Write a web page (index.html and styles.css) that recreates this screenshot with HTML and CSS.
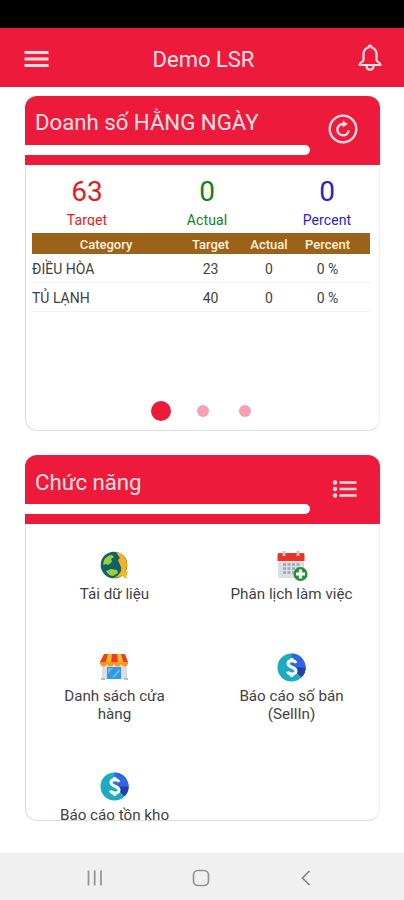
FILE: index.html
```html
<!DOCTYPE html>
<html lang="vi">
<head>
<meta charset="utf-8">
<title>Demo LSR</title>
<link rel="stylesheet" href="styles.css">
</head>
<body>
<div class="status"></div>
<header class="appbar">
  <svg class="menu" width="26" height="18" viewBox="0 0 26 18" stroke="#ffdde1" stroke-width="2.9"><path d="M.5 2.500h24M.5 9h24M.5 15.500h24"/></svg>
  <h1>Demo LSR</h1>
  <svg class="bell" width="26" height="30" viewBox="0 0 26 30" fill="none" stroke="#ffdde1" stroke-width="2.200" stroke-linejoin="round" stroke-linecap="round"><path d="M13 2.500c-.8 0-1.500 1-1.500 2-3.600.8-5 3.700-5 7v5.500c0 2-4 2.500-4 5h21c0-2.500-4-3-4-5v-5.500c0-3.300-1.400-6.200-5-7 0-1-.7-2-1.500-2zM9.500 22.500c0 5.500 7 5.500 7 0"/></svg>
</header>
<main>
  <section class="card sales">
    <div class="head">
      <h2>Doanh số HẰNG NGÀY</h2>
      <div class="bar"></div>
      <svg class="action" width="32" height="32" viewBox="0 0 32 32" fill="none" stroke="#ffdde1" stroke-width="2.300"><circle cx="16" cy="16" r="13.300"/><path d="M17.500 11h-1.500a5.700 5.700 0 1 0 5.700 6.200" stroke-width="2.300"/><path d="M15.800 7.500l5 3.600-5 3.500z" fill="#ffdde1" stroke="none"/></svg>
    </div>
    <div class="totals">
      <div class="total red"><b>63</b><span>Target</span></div>
      <div class="total green"><b>0</b><span>Actual</span></div>
      <div class="total blue"><b>0</b><span>Percent</span></div>
    </div>
    <div class="table">
      <div class="row th"><span>Category</span><span>Target</span><span>Actual</span><span>Percent</span></div>
      <div class="row"><span class="name">ĐIỀU HÒA</span><span>23</span><span>0</span><span>0 %</span></div>
      <div class="row"><span class="name">TỦ LẠNH</span><span>40</span><span>0</span><span>0 %</span></div>
    </div>
    <div class="dots"><i class="on"></i><i></i><i></i></div>
  </section>
  <section class="card functions">
    <div class="head">
      <h2>Chức năng</h2>
      <div class="bar"></div>
      <svg class="action list" width="26" height="20" viewBox="0 0 26 20" fill="#ffdde1"><circle cx="3" cy="3.500" r="2.200"/><circle cx="3" cy="10" r="2.200"/><circle cx="3" cy="16.500" r="2.200"/><path d="M7.500 2.300h17v2.500h-17zM7.500 8.800h17v2.500h-17zM7.500 15.300h17v2.500h-17z"/></svg>
    </div>
    <div class="tiles">
      <div class="tile">
        <svg width="32" height="30" viewBox="0 0 32 30"><circle cx="15" cy="14" r="13.300" fill="#12606a"/><path d="M5 9c2-3 5-5 8-5l2 2-3 2 1 3-4 3-2-1-3 1zM7 20l5-2 6 1 1 3-5 3c-3 0-5-2-7-5z" fill="#9cce35"/><path d="M17 1c7 1 11 7 11 13 0 4-2 8-6 11-2 1-5 2-7 2 5-3 8-6 7-11l-3-7 2-2z" fill="#f4b322"/><path d="M22 21l7-1-1 3-1 5-5-4z" fill="#f9b91b"/></svg>
        <p>Tải dữ liệu</p>
      </div>
      <div class="tile">
        <svg width="32" height="30" viewBox="0 0 32 30"><path d="M2 7h26v18q0 2-2 2H4q-2 0-2-2z" fill="#d9dfe3"/><path d="M3 2h24q1.500 0 1.500 2v6h-27V4q0-2 1.500-2z" fill="#e93428"/><path d="M8 0v5M22 0v5" stroke="#bdc5ca" stroke-width="3"/><path d="M7 13.500h17M7 17.500h17M7 21.500h17" stroke="#9da7ae" stroke-width="2.500" stroke-dasharray="3 1.500"/><circle cx="24.500" cy="23" r="7" fill="#24912f"/><path d="M24.500 18.500v9M20 23h9" stroke="#fff" stroke-width="3.200"/></svg>
        <p>Phân lịch làm việc</p>
      </div>
      <div class="tile">
        <svg width="32" height="30" viewBox="0 0 32 30"><path d="M3 11h25v15H3z" fill="#d7dee5"/><path d="M2 25h4v2H2zM25 25h4v2h-4z" fill="#b6bdc7"/><path d="M8 14h14v12H8z" fill="#3298e5"/><path d="M14 15l-5 6v-6zM20 16l-7 8h3l5-6z" fill="#69b9ee"/><path d="M5 1h21l3 8v2H1V9z" fill="#ef3b2d"/><path d="M9 1h4l-1 9H6.500zM18 1h4l2.500 9H19z" fill="#ffbd18"/><path d="M1 9h28v1q-1 3.500-3.500 3.500T22 10q-.5 3.500-3.500 3.500T15 10q-.5 3.500-3.500 3.500T8 10q-.5 3.500-3.500 3.500T1 10z" fill="#ff9717"/></svg>
        <p>Danh sách cửa<br>hàng</p>
      </div>
      <div class="tile">
        <svg width="32" height="30" viewBox="0 0 32 30"><circle cx="15.500" cy="14.500" r="14" fill="#1cabc0"/><path d="M15.500.5a14 14 0 0 1 10 23.800l-10-9.800z" fill="#3264e4"/><path d="M15.500 14.500h14a14 14 0 0 1-4 9.800z" fill="#233eb0"/><path d="M20 10c-1-3-8-3.500-8 .5 0 4.500 8 3 8 7.500 0 4-7.500 4-8.500.5M15.800 5v3M15.800 21v3" fill="none" stroke="#fff" stroke-width="3"/></svg>
        <p>Báo cáo số bán<br>(SellIn)</p>
      </div>
      <div class="tile">
        <svg width="32" height="30" viewBox="0 0 32 30"><circle cx="15.500" cy="14.500" r="14" fill="#1cabc0"/><path d="M15.500.5a14 14 0 0 1 10 23.800l-10-9.800z" fill="#3264e4"/><path d="M15.500 14.500h14a14 14 0 0 1-4 9.800z" fill="#233eb0"/><path d="M20 10c-1-3-8-3.500-8 .5 0 4.500 8 3 8 7.500 0 4-7.500 4-8.500.5M15.800 5v3M15.800 21v3" fill="none" stroke="#fff" stroke-width="3"/></svg>
        <p>Báo cáo tồn kho</p>
      </div>
    </div>
  </section>
</main>
<nav>
  <svg width="18" height="18" viewBox="0 0 18 18" stroke="#929292" stroke-width="1.700"><path d="M2.500 1.500v15M8.700 1.500v15M15 1.500v15"/></svg>
  <svg width="18" height="18" viewBox="0 0 18 18" fill="none" stroke="#929292" stroke-width="1.700"><rect x="1.500" y="1.500" width="15" height="15" rx="4.500"/></svg>
  <svg width="18" height="18" viewBox="0 0 18 18" fill="none" stroke="#858585" stroke-width="1.700"><path d="M12.500 2l-7 7 7 7"/></svg>
</nav>
</body>
</html>
```
FILE: styles.css
```css
* { box-sizing: border-box; }
body {
  margin: 0;
  height: 900px;
  display: flex;
  flex-direction: column;
  overflow: hidden;
  background: #fff;
  font-family: Roboto, sans-serif;
  color: #424242;
}
h1, h2, p { margin: 0; font-weight: 400; }
svg { display: block; }
.status { height: 28px; background: #000; }
.appbar {
  height: 59px;
  padding: 2px 21px 0 24px;
  display: grid;
  grid-template-columns: 26px 1fr 26px;
  align-items: center;
  background: #ee1a3b;
}
.appbar h1 { text-align: center; font-size: 22px; line-height: 28px; color: #ffe3e6; padding-top: 2px; }
.bell { margin-top: -2px; }
main { flex: 1; padding: 9px 24px 0 25px; display: flex; flex-direction: column; }
.card {
  border: 1px solid #dcdcdc;
  border-top: 0;
  border-radius: 12px;
  display: flex;
  flex-direction: column;
}
.sales { height: 335px; border-right-color: #eee; }
.functions { height: 366px; margin-top: 24px; border-right-color: #eee; }
.head {
  flex: none;
  height: 69px;
  margin: 0 -1px;
  display: grid;
  grid-template-columns: 285px 1fr;
  grid-template-rows: 49px 10px 10px;
  border-radius: 12px 12px 0 0;
  background: #ee1a3b;
}
.head h2 { padding: 11px 0 0 10px; font-size: 22.200px; line-height: 30px; color: #ffe0e3; white-space: nowrap; }
.functions h2 { padding-top: 12px; }
.bar { grid-row: 2; background: #fff; border-radius: 0 5px 5px 0; }
.action { grid-column: 2; grid-row: 1 / 4; justify-self: center; align-self: center; margin-right: 5px; margin-top: -3px; }
.list { margin-right: 0; margin-top: -1px; }
.totals { display: grid; grid-template-columns: repeat(3, 120px); padding: 11px 0 0 1px; height: 61px; overflow: hidden; }
.total { display: flex; flex-direction: column; align-items: center; }
.total b { font-size: 28px; line-height: 32px; font-weight: 400; }
.total span { font-size: 14px; line-height: 16px; height: 14px; margin-top: 4px; letter-spacing: .1px; overflow: hidden; }
.red { color: #e51c23; }
.green { color: #138018; }
.blue { color: #2822cf; }
.table { margin: 7px 9px 0 6px; }
.row {
  display: grid;
  grid-template-columns: 148px 61px 56px 61px;
  height: 29px;
  align-items: center;
  text-align: center;
  font-size: 14px;
  padding-top: 1px;
  border-bottom: 1px solid #f3f3f3;
}
.row.th { height: 21px; background: #9c6219; color: #fff1dc; font-size: 13px; font-weight: 500; border: 0; padding-top: 2px; }
.row .name { text-align: left; }
.dots { margin: auto 0 9px 125px; display: flex; align-items: center; gap: 30px; }
.dots i { width: 12px; height: 12px; border-radius: 50%; background: #f5a0b4; }
.dots .on { width: 20px; height: 20px; margin-right: -4px; background: #ee1a3b; }
.tiles { flex: 1; min-height: 0; overflow: hidden; display: grid; grid-template-columns: 177px 177px; grid-template-rows: 102px 119px 60px; padding-top: 27px; }
.tile { display: flex; flex-direction: column; align-items: center; }
.tile p { font-size: 15.200px; line-height: 18px; margin-top: 4px; text-align: center; white-space: nowrap; }
nav {
  height: 47px;
  padding: 2px 89px 0 86px;
  display: flex;
  align-items: center;
  justify-content: space-between;
  background: #f0f0f0;
}
```
